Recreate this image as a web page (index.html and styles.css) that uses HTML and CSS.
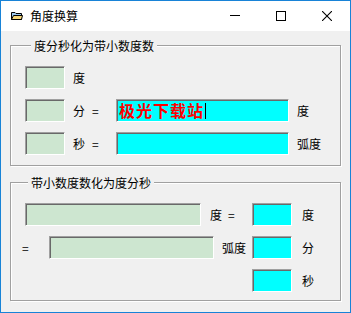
FILE: index.html
```html
<!DOCTYPE html>
<html>
<head>
<meta charset="UTF-8">
<title>角度换算</title>
<link rel="stylesheet" href="styles.css">
</head>
<body>
<div class="window">
  <div class="titlebar">
    <svg class="app-icon" width="12" height="10" viewBox="0 0 12 10">
      <path d="M0.5 1.5 H4 L5 2.5 H10.5 V8.5 H0.5 Z" fill="#9cc8f0" stroke="#000"/>
      <path d="M2.5 4.5 H11.5 L10.5 8.5 H0.5 Z" fill="#f5d77a" stroke="#000"/>
    </svg>
    <span class="title">角度换算</span>
    <div class="controls">
      <span class="ctl"><svg width="10" height="10" viewBox="0 0 10 10"><path d="M0 4.5 H10" stroke="#000"/></svg></span>
      <span class="ctl"><svg width="10" height="10" viewBox="0 0 10 10"><rect x="0.5" y="0.5" width="9" height="9" fill="none" stroke="#000"/></svg></span>
      <span class="ctl"><svg width="10" height="10" viewBox="0 0 10 10"><path d="M0 0 L10 10 M10 0 L0 10" stroke="#000" stroke-width="1.1"/></svg></span>
    </div>
  </div>

  <div class="client">
    <!-- 度分秒 -> 小数度 -->
    <fieldset class="group group-dms">
      <legend>度分秒化为带小数度数</legend>
      <div class="row">
        <div class="box small green"></div><span class="unit">度</span>
      </div>
      <div class="row">
        <div class="box small green"></div><span class="unit">分</span><span class="eq">=</span>
        <div class="box wide cyan"><span class="typed">极光下载站</span><span class="caret"></span></div>
        <span class="unit-r">度</span>
      </div>
      <div class="row">
        <div class="box small green"></div><span class="unit">秒</span><span class="eq">=</span>
        <div class="box wide cyan"></div>
        <span class="unit-r">弧度</span>
      </div>
    </fieldset>

    <!-- 小数度 -> 度分秒 -->
    <fieldset class="group group-dec">
      <legend>带小数度数化为度分秒</legend>
      <div class="row">
        <div class="left">
          <div class="box deg green"></div><span class="unit2">度</span><span class="eq2">=</span>
        </div>
        <div class="box small cyan"></div><span class="unit">度</span>
      </div>
      <div class="row">
        <div class="left">
          <span class="eq3">=</span><div class="box rad green"></div><span class="unit3">弧度</span>
        </div>
        <div class="box small cyan"></div><span class="unit">分</span>
      </div>
      <div class="row">
        <div class="left"></div>
        <div class="box small cyan"></div><span class="unit">秒</span>
      </div>
    </fieldset>
  </div>
</div>
</body>
</html>
```

FILE: styles.css
```css
html, body {
  margin: 0;
  padding: 0;
}
body {
  font-family: "Noto Sans CJK SC", "Liberation Sans", sans-serif;
  font-size: 12px;
  color: #000;
}
.window {
  box-sizing: border-box;
  width: 351px;
  height: 313px;
  border: 1px solid #1883d7;
  display: flex;
  flex-direction: column;
  background: #f0f0f0;
}

/* 标题栏 */
.titlebar {
  height: 30px;
  background: #fff;
  display: flex;
  align-items: center;
  padding-left: 10px;
}
.app-icon {
  display: block;
  margin-right: 7px;
}
.title {
  font-size: 12px;
  line-height: 14px;
}
.controls {
  margin-left: auto;
  display: flex;
  height: 30px;
}
.ctl {
  width: 46px;
  display: flex;
  align-items: center;
  justify-content: center;
}
.ctl svg {
  display: block;
}

/* 客户区 */
.client {
  flex: 1;
  background: #f0f0f0;
}
.group {
  margin: 7px 9px 0 9px;
  border: 1px solid #a0a0a0;
  box-shadow: inset 1px 1px 0 #fff, 1px 1px 0 #fff;
  min-inline-size: 0;
}
.group legend {
  margin-left: 6px;
  padding: 0 3px;
  line-height: 15px;
  background: #f0f0f0;
}
.group-dms {
  padding: 13px 0 10px 14px;
}
.group-dec {
  margin-top: 9px;
  padding: 13px 0 8px 11px;
}
.row {
  display: flex;
  align-items: center;
  height: 23px;
  white-space: nowrap;
}
.row + .row {
  margin-top: 10px;
}

/* 文本框 */
.box {
  box-sizing: border-box;
  flex: none;
  height: 23px;
  border-style: solid;
  border-width: 1px;
  border-color: #a0a0a0 #fff #fff #a0a0a0;
  box-shadow: inset 1px 1px 0 #696969;
}
.green { background: #cde6d0; }
.cyan { background: #00ffff; }
.small { width: 40px; margin-right: 10px; }
.group-dms .small { margin-right: 8px; }
.wide { width: 173px; margin-right: 8px; display: flex; align-items: center; padding-left: 2px; }
.deg { width: 176px; margin-left: 3px; margin-right: 9px; }
.rad { width: 165px; margin-right: 8px; }

.unit { width: 19px; flex: none; }
.eq { width: 24px; flex: none; }
.unit2 { width: 18px; flex: none; }
.eq2 { width: 24px; flex: none; }
.eq3 { width: 27px; flex: none; }
.unit3 { flex: none; }
.left {
  width: 230px;
  flex: none;
  display: flex;
  align-items: center;
}

.typed {
  color: #ff0000;
  font-weight: bold;
  font-size: 16px;
  line-height: 17px;
  letter-spacing: 1px;
}
.caret {
  width: 1px;
  height: 16px;
  background: #000;
  margin-left: 1px;
}
```
